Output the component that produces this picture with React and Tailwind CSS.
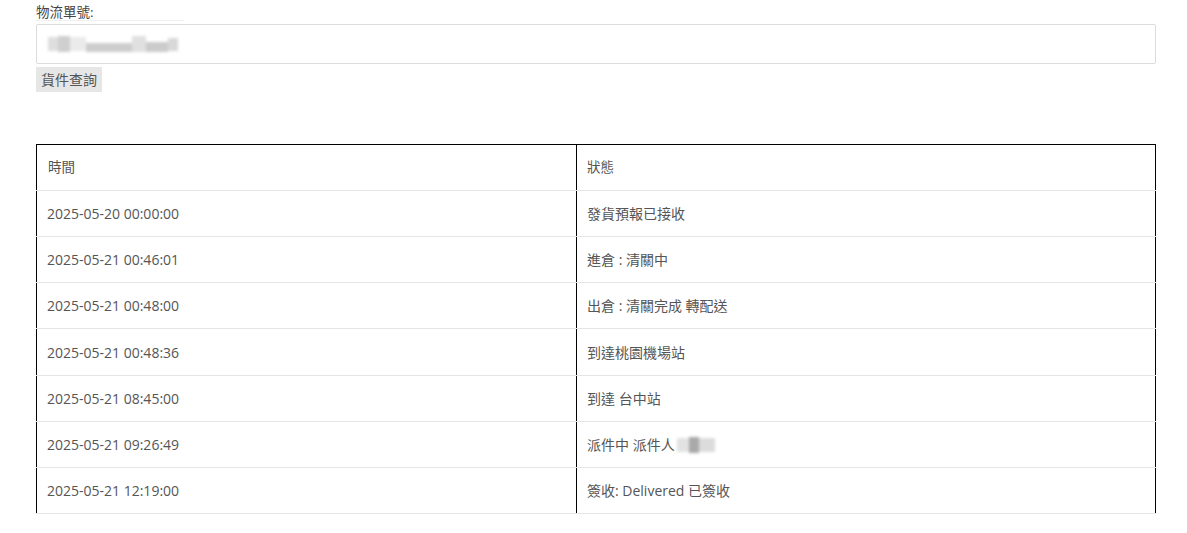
import React from "react";

const rows = [
  ["2025-05-20 00:00:00", "發貨預報已接收"],
  ["2025-05-21 00:46:01", "進倉 : 清關中"],
  ["2025-05-21 00:48:00", "出倉 : 清關完成 轉配送"],
  ["2025-05-21 00:48:36", "到達桃園機場站", false, true],
  ["2025-05-21 08:45:00", "到達 台中站"],
  ["2025-05-21 09:26:49", "派件中 派件人", true],
  ["2025-05-21 12:19:00", "簽收: Delivered 已簽收"],
];

const font = { fontFamily: '"Open Sans", "Noto Sans CJK TC", sans-serif' };

export default function App() {
  return (
    <div className="min-h-[533px] bg-white text-[14px] text-[#555]" style={font}>
      <div className="pl-[36px] pr-[31px] pt-[2px]">
        <div className="h-[21px] leading-[20px] text-[13.5px] text-[#444]">
          <span className="pr-[90px] bg-[linear-gradient(to_bottom,transparent_17px,#f0f0f0_17px,#f0f0f0_21px)]">物流單號:</span>
        </div>
        <div className="mt-[1px] h-[40px] rounded-[2px] border border-[#dcdcdc] flex items-center pl-[11px]">
          <div className="flex items-center blur-[1.5px]">
            <div className="w-[10px] h-[14px] bg-[#dedede]" />
            <div className="w-[12px] h-[16px] bg-[#cfcfcf]" />
            <div className="w-[16px] h-[14px] bg-[#ebebeb]" />
            <div className="w-[46px] h-[9px] bg-[#cdcdcd] mt-[6px]" />
            <div className="w-[14px] h-[16px] bg-[#e0e0e0]" />
            <div className="w-[22px] h-[10px] bg-[#cbcbcb] mt-[5px]" />
            <div className="w-[10px] h-[13px] bg-[#d8d8d8]" />
          </div>
        </div>
        <button className="mt-[3px] h-[25px] px-[5px] bg-[#e6e6e6] text-[14px] text-[#555] leading-[25px]">
          貨件查詢
        </button>
      </div>

      <div className="mt-[52px] ml-[36px] w-[1120px] border-t border-black">
        <div className="grid grid-cols-[540px_580px] h-[46px] border-b border-[#e6e6e6]">
          <div className="border-l border-black flex items-center pl-[11px] text-[13.5px]">時間</div>
          <div className="border-l border-r border-black flex items-center pl-[10px] text-[13.5px]">狀態</div>
        </div>
        {rows.map(([t, s, blur, tall], i) => (
          <div
            key={i}
            className={`grid grid-cols-[540px_580px] border-b border-[#e6e6e6] ${tall ? "h-[47px]" : "h-[46px]"}`}
          >
            <div className="border-l border-black flex items-center pl-[10px]">{t}</div>
            <div className="border-l border-r border-black flex items-center pl-[10px]">
              <span>{s}</span>
              {blur && (
                <span className="flex items-center blur-[1.5px] ml-[2px]">
                  <span className="w-[12px] h-[14px] bg-[#e2e2e2]" />
                  <span className="w-[10px] h-[16px] bg-[#a9a9a9]" />
                  <span className="w-[16px] h-[14px] bg-[#dcdcdc]" />
                </span>
              )}
            </div>
          </div>
        ))}
      </div>
    </div>
  );
}
